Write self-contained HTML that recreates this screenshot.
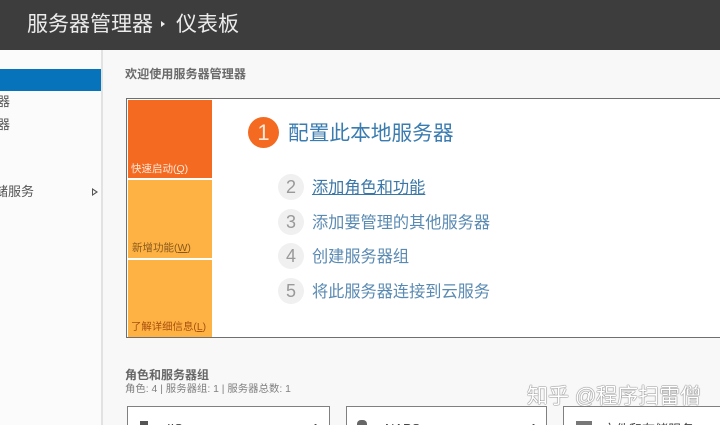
<!DOCTYPE html>
<html lang="zh"><head><meta charset="utf-8"><style>
html,body{margin:0;padding:0;width:720px;height:425px;overflow:hidden}
body{font-family:"Liberation Sans","Noto Sans CJK SC",sans-serif}
#w{position:absolute;left:0;top:0;width:720px;height:425px;overflow:hidden;background:#f8f8f8;filter:blur(.3px)}
#w div{position:absolute;white-space:nowrap}
#w .s{left:0;font-size:13px;line-height:16px;color:#555}
#w .n{width:26px;height:26px;border-radius:50%;background:#f0f0f0;color:#999;font-size:18px;line-height:26px;text-align:center;left:278px}
#w .l{left:312px;font-size:16.2px;line-height:20px;color:#5a8ab2}
#w .t{left:131px;font-size:10.5px;line-height:14px}
#w .c{top:406px;height:30px;background:#fff;border:1px solid #808080;box-sizing:border-box}
#w .m{font-size:13px;line-height:16px;color:#444}
</style></head><body><div id="w">
<div style="left:0;top:0;width:720px;height:50px;background:#3d3d3d"></div>
<div style="left:27px;top:10px;font-size:21px;line-height:29px;color:#ececec">服务器管理器</div>
<div style="left:161px;top:21px;width:0;height:0;border-left:4px solid #eee;border-top:3.5px solid transparent;border-bottom:3.5px solid transparent"></div>
<div style="left:176px;top:10px;font-size:21px;line-height:29px;color:#ececec">仪表板</div>
<div style="left:0;top:50px;width:101px;height:375px;background:#fbfbfb"></div>
<div style="left:101px;top:50px;width:2px;height:375px;background:#e2e2e2"></div>
<div style="left:0;top:69px;width:101px;height:22px;background:#0773bb"></div>
<div class="s" style="top:94px;left:-3px">器</div>
<div class="s" style="top:117px;left:-3px">器</div>
<div class="s" style="top:184px;left:-5px">储服务</div>
<div style="left:92px;top:188px;width:0;height:0;border-left:6px solid #555;border-top:4px solid transparent;border-bottom:4px solid transparent"></div>
<div style="left:93px;top:190px;width:0;height:0;border-left:3px solid #fbfbfb;border-top:2px solid transparent;border-bottom:2px solid transparent"></div>
<div style="left:125px;top:67px;font-size:12.1px;line-height:15px;font-weight:bold;color:#6a6a6a">欢迎使用服务器管理器</div>
<div style="left:126px;top:98px;width:600px;height:240px;box-sizing:border-box;background:#fff;border:1px solid #6f6f6f"></div>
<div style="left:128px;top:100px;width:84px;height:78px;background:#f46a21"></div>
<div style="left:128px;top:180px;width:84px;height:78px;background:#feb243"></div>
<div style="left:128px;top:260px;width:84px;height:77px;background:#feb243"></div>
<div class="t" style="top:162px;color:#fde8d8">快速启动(<u>Q</u>)</div>
<div class="t" style="top:241px;left:132px;color:#8a5a1c">新增功能(<u>W</u>)</div>
<div class="t" style="top:321px;font-size:10.4px;color:#a9500f">了解详细信息(<u>L</u>)</div>
<div style="left:248px;top:117px;width:31px;height:31px;border-radius:50%;background:#f46a21;color:#fde6d6;font-size:22px;line-height:31px;text-align:center">1</div>
<div style="left:288px;top:120px;font-size:20.7px;line-height:28px;color:#3a7cb0">配置此本地服务器</div>
<div class="n" style="top:174px">2</div><div class="l" style="top:178px;color:#3a76a6;text-decoration:underline">添加角色和功能</div>
<div class="n" style="top:209px">3</div><div class="l" style="top:213px">添加要管理的其他服务器</div>
<div class="n" style="top:243px">4</div><div class="l" style="top:247px">创建服务器组</div>
<div class="n" style="top:278px">5</div><div class="l" style="top:282px">将此服务器连接到云服务</div>
<div style="left:125px;top:368px;font-size:12px;line-height:15px;font-weight:bold;color:#666">角色和服务器组</div>
<div style="left:125px;top:383px;font-size:10.4px;line-height:14px;color:#808080">角色: 4 | 服务器组: 1 | 服务器总数: 1</div>
<div class="c" style="left:127px;width:203px"></div>
<div class="c" style="left:346px;width:201px"></div>
<div class="c" style="left:563px;width:170px"></div>
<div style="left:140px;top:421px;width:8px;height:4px;background:#555"></div>
<div class="m" style="left:167px;top:421px">IIS</div>
<div class="m" style="left:312px;top:421px">1</div>
<div style="left:357px;top:420px;width:10px;height:5px;background:#666;border-radius:4px 4px 0 0"></div>
<div class="m" style="left:385px;top:421px">NAPS</div>
<div class="m" style="left:530px;top:421px">1</div>
<div style="left:576px;top:421px;width:16px;height:4px;background:#777"></div>
<div class="m" style="left:603px;top:422px">文件和存储服务</div>
<div style="left:527px;top:384px;font-size:21px;line-height:25px;color:#fff;text-shadow:0 0 1px #777,0 0 1px #777,0 0 1px #777">知乎 @程序扫雷僧</div>
</div></body></html>
